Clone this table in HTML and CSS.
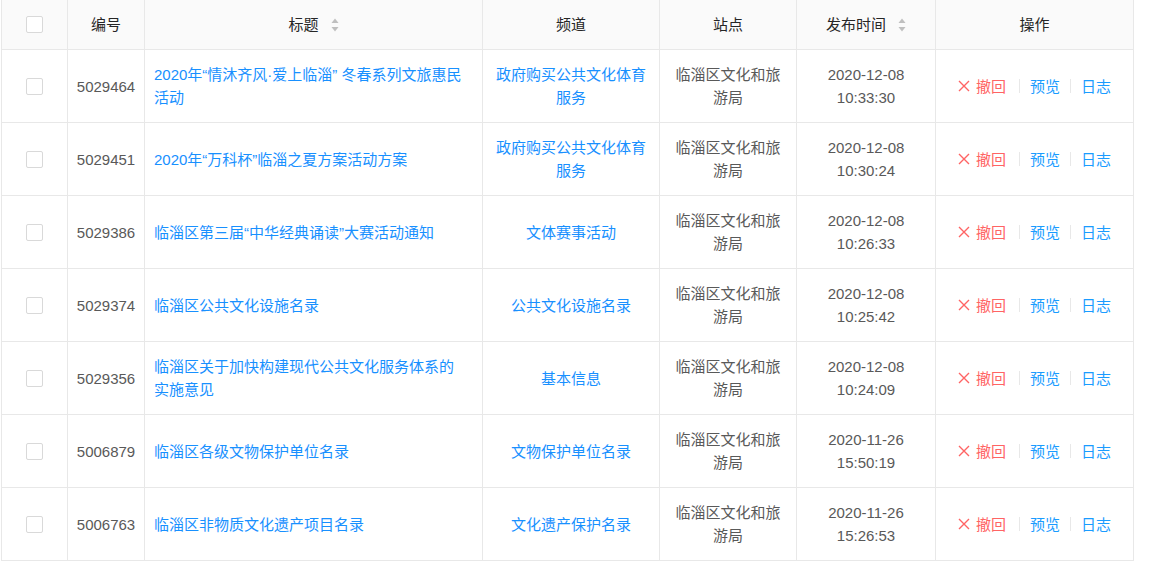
FILE: index.html
```html
<!DOCTYPE html>
<html lang="zh-CN">
<head>
<meta charset="utf-8">
<title>内容列表</title>
<link rel="stylesheet" href="styles.css">
</head>
<body>
<div class="page">
  <div class="table">
    <div class="row head">
      <div class="cell"><span class="checkbox"></span></div>
      <div class="cell">编号</div>
      <div class="cell">标题<svg class="sorter" viewBox="0 0 8 14" width="8" height="14"><path d="M4 0.5 L7.5 5 L0.5 5 Z" fill="#bfbfbf"/><path d="M4 13.5 L7.5 9 L0.5 9 Z" fill="#bfbfbf"/></svg></div>
      <div class="cell">频道</div>
      <div class="cell">站点</div>
      <div class="cell">发布时间<svg class="sorter" viewBox="0 0 8 14" width="8" height="14"><path d="M4 0.5 L7.5 5 L0.5 5 Z" fill="#bfbfbf"/><path d="M4 13.5 L7.5 9 L0.5 9 Z" fill="#bfbfbf"/></svg></div>
      <div class="cell">操作</div>
    </div>

    <div class="row">
      <div class="cell"><span class="checkbox"></span></div>
      <div class="cell">5029464</div>
      <div class="cell title"><a class="link">2020年“情沐齐风·爱上临淄” 冬春系列文旅惠民活动</a></div>
      <div class="cell"><a class="link">政府购买公共文化体育服务</a></div>
      <div class="cell">临淄区文化和旅游局</div>
      <div class="cell">2020-12-08 10:33:30</div>
      <div class="cell actions"><a class="revoke"><svg class="x" viewBox="0 0 12 12" width="12" height="12"><path d="M1 1 L11 11 M11 1 L1 11" stroke="currentColor" stroke-width="1.4" fill="none"/></svg>撤回</a><i class="divider"></i><a class="act">预览</a><i class="divider"></i><a class="act">日志</a></div>
    </div>

    <div class="row">
      <div class="cell"><span class="checkbox"></span></div>
      <div class="cell">5029451</div>
      <div class="cell title"><a class="link">2020年“万科杯”临淄之夏方案活动方案</a></div>
      <div class="cell"><a class="link">政府购买公共文化体育服务</a></div>
      <div class="cell">临淄区文化和旅游局</div>
      <div class="cell">2020-12-08 10:30:24</div>
      <div class="cell actions"><a class="revoke"><svg class="x" viewBox="0 0 12 12" width="12" height="12"><path d="M1 1 L11 11 M11 1 L1 11" stroke="currentColor" stroke-width="1.4" fill="none"/></svg>撤回</a><i class="divider"></i><a class="act">预览</a><i class="divider"></i><a class="act">日志</a></div>
    </div>

    <div class="row">
      <div class="cell"><span class="checkbox"></span></div>
      <div class="cell">5029386</div>
      <div class="cell title"><a class="link">临淄区第三届“中华经典诵读”大赛活动通知</a></div>
      <div class="cell"><a class="link">文体赛事活动</a></div>
      <div class="cell">临淄区文化和旅游局</div>
      <div class="cell">2020-12-08 10:26:33</div>
      <div class="cell actions"><a class="revoke"><svg class="x" viewBox="0 0 12 12" width="12" height="12"><path d="M1 1 L11 11 M11 1 L1 11" stroke="currentColor" stroke-width="1.4" fill="none"/></svg>撤回</a><i class="divider"></i><a class="act">预览</a><i class="divider"></i><a class="act">日志</a></div>
    </div>

    <div class="row">
      <div class="cell"><span class="checkbox"></span></div>
      <div class="cell">5029374</div>
      <div class="cell title"><a class="link">临淄区公共文化设施名录</a></div>
      <div class="cell"><a class="link">公共文化设施名录</a></div>
      <div class="cell">临淄区文化和旅游局</div>
      <div class="cell">2020-12-08 10:25:42</div>
      <div class="cell actions"><a class="revoke"><svg class="x" viewBox="0 0 12 12" width="12" height="12"><path d="M1 1 L11 11 M11 1 L1 11" stroke="currentColor" stroke-width="1.4" fill="none"/></svg>撤回</a><i class="divider"></i><a class="act">预览</a><i class="divider"></i><a class="act">日志</a></div>
    </div>

    <div class="row">
      <div class="cell"><span class="checkbox"></span></div>
      <div class="cell">5029356</div>
      <div class="cell title"><a class="link">临淄区关于加快构建现代公共文化服务体系的实施意见</a></div>
      <div class="cell"><a class="link">基本信息</a></div>
      <div class="cell">临淄区文化和旅游局</div>
      <div class="cell">2020-12-08 10:24:09</div>
      <div class="cell actions"><a class="revoke"><svg class="x" viewBox="0 0 12 12" width="12" height="12"><path d="M1 1 L11 11 M11 1 L1 11" stroke="currentColor" stroke-width="1.4" fill="none"/></svg>撤回</a><i class="divider"></i><a class="act">预览</a><i class="divider"></i><a class="act">日志</a></div>
    </div>

    <div class="row">
      <div class="cell"><span class="checkbox"></span></div>
      <div class="cell">5006879</div>
      <div class="cell title"><a class="link">临淄区各级文物保护单位名录</a></div>
      <div class="cell"><a class="link">文物保护单位名录</a></div>
      <div class="cell">临淄区文化和旅游局</div>
      <div class="cell">2020-11-26 15:50:19</div>
      <div class="cell actions"><a class="revoke"><svg class="x" viewBox="0 0 12 12" width="12" height="12"><path d="M1 1 L11 11 M11 1 L1 11" stroke="currentColor" stroke-width="1.4" fill="none"/></svg>撤回</a><i class="divider"></i><a class="act">预览</a><i class="divider"></i><a class="act">日志</a></div>
    </div>

    <div class="row">
      <div class="cell"><span class="checkbox"></span></div>
      <div class="cell">5006763</div>
      <div class="cell title"><a class="link">临淄区非物质文化遗产项目名录</a></div>
      <div class="cell"><a class="link">文化遗产保护名录</a></div>
      <div class="cell">临淄区文化和旅游局</div>
      <div class="cell">2020-11-26 15:26:53</div>
      <div class="cell actions"><a class="revoke"><svg class="x" viewBox="0 0 12 12" width="12" height="12"><path d="M1 1 L11 11 M11 1 L1 11" stroke="currentColor" stroke-width="1.4" fill="none"/></svg>撤回</a><i class="divider"></i><a class="act">预览</a><i class="divider"></i><a class="act">日志</a></div>
    </div>
  </div>
</div>
</body>
</html>
```

FILE: styles.css
```css
* { box-sizing: border-box; }
html, body {
  margin: 0;
  padding: 0;
  background: #ffffff;
}
body {
  font-family: "Liberation Sans", "Noto Sans CJK SC", sans-serif;
  font-size: 15px;
  line-height: 23px;
  color: #595959;
}
.page {
  padding-left: 1px;
}
.table {
  width: 1133px;
  border-left: 1px solid #e8e8e8;
}
.row {
  display: grid;
  grid-template-columns: 66px 77px 338px 177px 137px 139px 198px;
}
.cell {
  display: flex;
  align-items: center;
  justify-content: center;
  text-align: center;
  height: 73px;
  padding: 0 10px;
  border-right: 1px solid #e8e8e8;
  border-bottom: 1px solid #e8e8e8;
}
.head .cell {
  height: 50px;
  background: #fafafa;
  color: #262626;
}
.cell.title {
  justify-content: flex-start;
  text-align: left;
  padding: 0 16px 0 9px;
}
.checkbox {
  display: inline-block;
  width: 17px;
  height: 17px;
  border: 1px solid #d9d9d9;
  border-radius: 2px;
  background: #fff;
}
.sorter {
  margin-left: 12px;
  flex: none;
}
.link {
  color: #1890ff;
  cursor: pointer;
}
.actions {
  white-space: nowrap;
}
.revoke {
  color: #ff6464;
  display: inline-flex;
  align-items: center;
  cursor: pointer;
}
.x {
  margin-right: 6px;
}
.act {
  color: #1a9cff;
  cursor: pointer;
}
.divider {
  display: inline-block;
  width: 1px;
  height: 14px;
  background: #e8e8e8;
  margin: 0 10px 0 13px;
}
.divider + .act + .divider {
  margin: 0 10px;
}
```
